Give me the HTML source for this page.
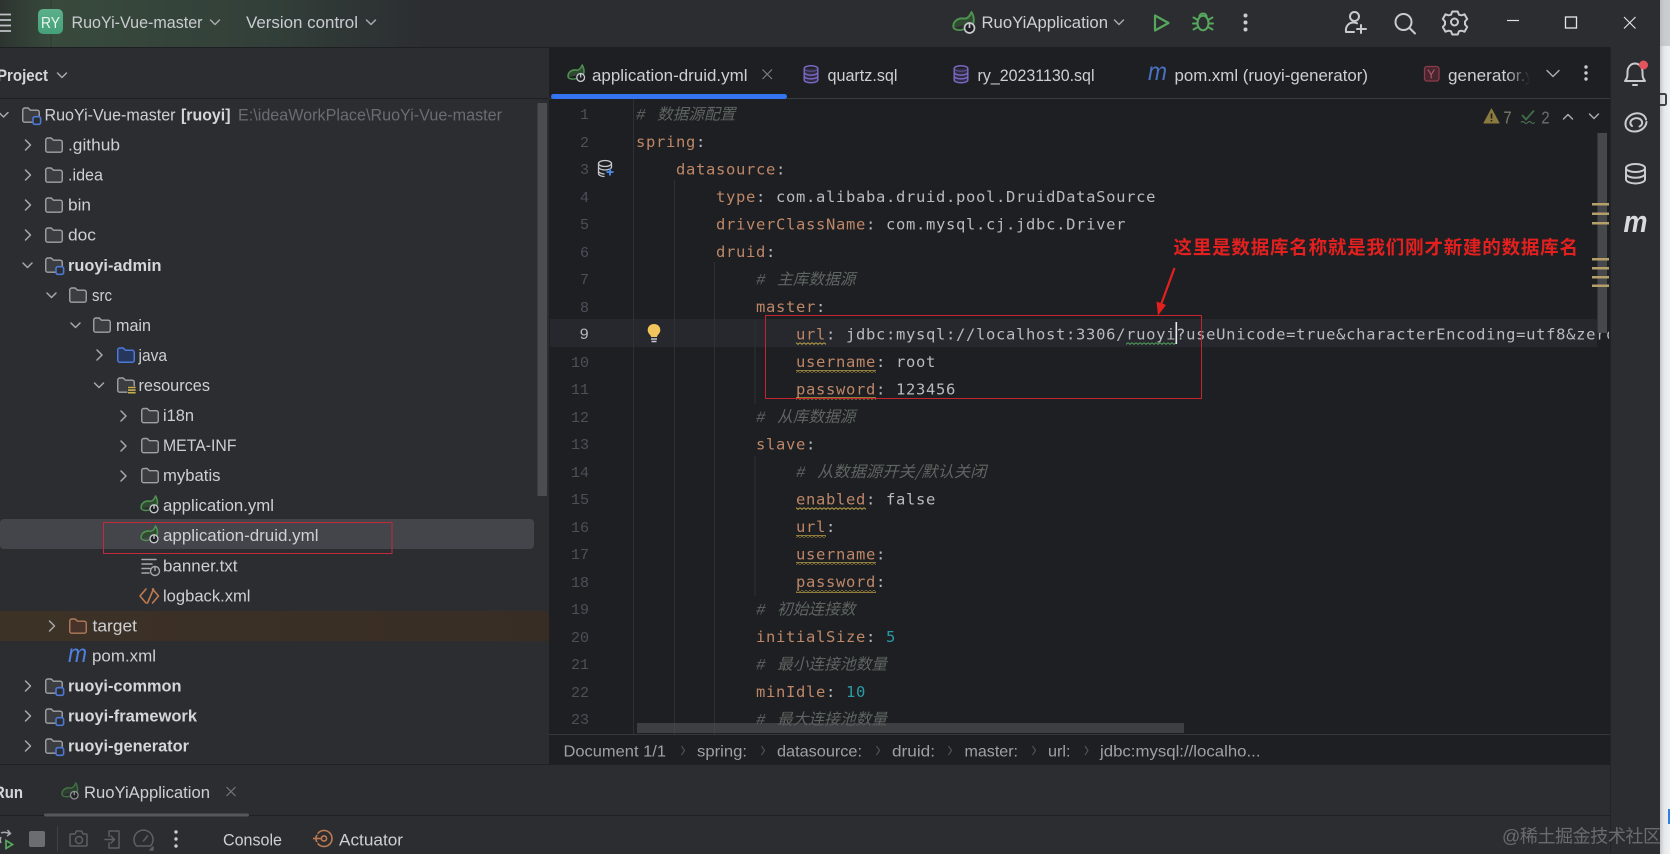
<!DOCTYPE html>
<html lang="zh">
<head>
<meta charset="utf-8">
<title>RuoYi-Vue-master</title>
<style>
html,body{margin:0;padding:0;background:#1e1f22;width:1670px;height:854px;overflow:hidden}
svg{display:block;position:absolute;left:0;top:0;filter:blur(.3px)}
text{white-space:pre}
.s{font-family:"Liberation Sans","Noto Sans CJK SC",sans-serif;font-size:16.5px;fill:#cdcfd4}
.b{font-weight:700;fill:#d4d6da}
.dim{fill:#686c73}
.t{fill:#c9cbd0}
.bc{font-family:"Liberation Sans",sans-serif;font-size:16px;fill:#9ea0a6}
.m{font-family:"DejaVu Sans Mono","Liberation Mono",monospace;font-size:15.5px;letter-spacing:.67px;fill:#b8babf}
.k{fill:#bd8768}
.n{fill:#2a9ba6}
.c{font-family:"Liberation Mono",monospace;font-size:16px;font-style:italic;fill:#5d6561}
.cj{font-family:"Noto Sans CJK SC","WenQuanYi Zen Hei",sans-serif;font-size:15.7px;font-style:italic;fill:#5d6561}
.ln{font-family:"Liberation Mono",monospace;font-size:15px;fill:#4b5059;text-anchor:end}
.ic{fill:none;stroke:#a6a8ae;stroke-width:1.5;stroke-linecap:round;stroke-linejoin:round}
.wh{fill:none;stroke:#c9cbd0;stroke-width:2;stroke-linecap:round;stroke-linejoin:round}
</style>
</head>
<body>
<svg xmlns="http://www.w3.org/2000/svg" width="1670" height="854" viewBox="0 0 1670 854">
<defs>
<linearGradient id="tg" x1="0" x2="1" y1="0" y2="0">
<stop offset="0" stop-color="#2d3430"/><stop offset=".12" stop-color="#384a3c"/><stop offset=".6" stop-color="#33403a"/><stop offset="1" stop-color="#2b2d30"/>
</linearGradient>
<linearGradient id="ry" x1="0" x2="0" y1="0" y2="1"><stop offset="0" stop-color="#5bb08a"/><stop offset="1" stop-color="#45a07a"/></linearGradient>
<linearGradient id="tgt" x1="0" x2="1" y1="0" y2="0"><stop offset="0" stop-color="#3d3226"/><stop offset=".6" stop-color="#3a2f25"/><stop offset="1" stop-color="#372d25"/></linearGradient>
<linearGradient id="fade" x1="0" x2="1" y1="0" y2="0"><stop offset="0" stop-color="#1e1f22" stop-opacity="0"/><stop offset="1" stop-color="#1e1f22"/></linearGradient>
<linearGradient id="edge" x1="0" x2="1" y1="0" y2="0"><stop offset="0" stop-color="#c4c5c7"/><stop offset=".4" stop-color="#e6e7e9"/><stop offset="1" stop-color="#f0f1f3"/></linearGradient>
<pattern id="sqy" width="4" height="3" patternUnits="userSpaceOnUse"><path d="M0 .7 L2 2.3 L4 .7" fill="none" stroke="#b39a45" stroke-width="1"/></pattern>
<pattern id="sqg" width="4" height="3" patternUnits="userSpaceOnUse"><path d="M0 .7 L2 2.3 L4 .7" fill="none" stroke="#4e9a57" stroke-width="1"/></pattern>
<clipPath id="codeclip"><rect x="550" y="99" width="1059" height="635"/></clipPath>

<g id="folder"><path d="M.75 2.5a2 2 0 0 1 2-2h3.5l2.2 2.2h6.8a2 2 0 0 1 2 2v8a2 2 0 0 1-2 2H2.75a2 2 0 0 1-2-2z" fill="#3b3d41" stroke="#a0a2a8" stroke-width="1.4" stroke-linejoin="round"/></g>
<g id="folderb"><path d="M.75 2.5a2 2 0 0 1 2-2h3.5l2.2 2.2h6.8a2 2 0 0 1 2 2v8a2 2 0 0 1-2 2H2.75a2 2 0 0 1-2-2z" fill="#27365c" stroke="#4c78d6" stroke-width="1.5" stroke-linejoin="round"/></g>
<g id="foldero"><path d="M.75 2.5a2 2 0 0 1 2-2h3.5l2.2 2.2h6.8a2 2 0 0 1 2 2v8a2 2 0 0 1-2 2H2.75a2 2 0 0 1-2-2z" fill="#47332a" stroke="#b07c5c" stroke-width="1.4" stroke-linejoin="round"/></g>
<g id="module"><use href="#folder"/><rect x="11" y="9.2" width="7.6" height="7.6" rx="1.8" fill="#2b2d30" stroke="#4c78d6" stroke-width="1.6"/></g>
<g id="res"><use href="#folder"/><rect x="10.5" y="8.8" width="8" height="7.6" fill="#2b2d30"/><path d="M11 10h7.6M11 12.6h7.6M11 15.2h7.6" stroke="#c9ae4f" stroke-width="1.6"/></g>
<g id="leaf"><path d="M1.5 15.5C.5 9.500 6 5.500 12 6.500c3 .5 5.500-1.500 7.500-6.500 2.200 4 3 8 1.700 11.500" fill="#2f4a30" stroke="#4f9150" stroke-width="2" stroke-linejoin="round" stroke-linecap="round"/><path d="M2 16.500c3 2 6 2 9 1" fill="none" stroke="#4f9150" stroke-width="1.800" stroke-linecap="round"/><circle cx="17.500" cy="16" r="5" fill="#1e1f22" stroke="#c6c8cc" stroke-width="1.700"/><path d="M17.500 11.500v4.500" stroke="#c6c8cc" stroke-width="1.700"/></g>
<g id="dbp"><ellipse cx="8" cy="3.500" rx="6.800" ry="2.800" fill="none" stroke="#7a67c2" stroke-width="1.500"/><path d="M1.200 3.500v11.500c0 1.500 3 2.800 6.800 2.800s6.800-1.300 6.800-2.800V3.500M1.200 7.300c0 1.500 3 2.800 6.800 2.800s6.800-1.300 6.800-2.800M1.200 11.100c0 1.500 3 2.800 6.800 2.800s6.800-1.300 6.800-2.800" fill="#3a3356" fill-opacity=".6" stroke="#7a67c2" stroke-width="1.500"/></g>
</defs>

<!-- base -->
<rect width="1670" height="854" fill="#1e1f22"/>
<rect x="1660" y="0" width="10" height="854" fill="url(#edge)"/>
<rect x="1660" y="0" width="10" height="46" fill="#b4b5b7" fill-opacity=".6"/>
<path d="M1660 94h4.500a1.500 1.500 0 0 1 1.500 1.500v8a1.500 1.500 0 0 1-1.500 1.500H1660" fill="none" stroke="#3f4144" stroke-width="2"/>
<rect x="1668" y="809" width="2" height="15" fill="#2f7fe8"/>

<!-- title bar -->
<rect x="0" y="0" width="1660" height="47" fill="#2b2d30"/>
<rect x="0" y="0" width="430" height="47" fill="url(#tg)"/>
<rect x="50.500" y="0" width="1" height="47" fill="#2f3a33"/>
<path d="M0 14.500h11M0 20h11M0 25.500h11M0 31h11" stroke="#bfc1c5" stroke-width="1.700"/>
<rect x="38" y="9" width="25" height="25" rx="5" fill="url(#ry)"/>
<text x="41" y="28" font-family="Liberation Sans,sans-serif" font-size="15.500" fill="#eaf5ef" textLength="19" lengthAdjust="spacingAndGlyphs">RY</text>
<text class="s t" x="71.500" y="28" textLength="131" lengthAdjust="spacingAndGlyphs">RuoYi-Vue-master</text>
<path class="ic" d="M210.500 20l4.500 4.500 4.500-4.500"/>
<text class="s t" x="246" y="28" textLength="112" lengthAdjust="spacingAndGlyphs">Version control</text>
<path class="ic" d="M366.500 20l4.500 4.500 4.500-4.500"/>
<use href="#leaf" transform="translate(952,12)"/>
<text class="s" x="981.500" y="28" fill="#dfe1e5" textLength="126.500" lengthAdjust="spacingAndGlyphs">RuoYiApplication</text>
<path class="ic" d="M1114.500 20l4.500 4.500 4.500-4.500"/>
<path d="M1155 15.500L1168.500 23 1155 30.500Z" fill="none" stroke="#57a65e" stroke-width="2.200" stroke-linejoin="round"/>
<g fill="none" stroke="#57a65e" stroke-width="2" stroke-linecap="round"><ellipse cx="1203" cy="23" rx="5.500" ry="7.300"/><path d="M1199.500 16.500c0-4 7-4 7 0M1193.500 17.500l3.500 2M1212.500 17.500l-3.500 2M1193 23.500h4.500M1213 23.500h-4.500M1193.500 29.500l3.500-2M1212.500 29.500l-3.500-2"/></g>
<circle cx="1245.500" cy="15.500" r="2" fill="#c9cbd0"/><circle cx="1245.500" cy="22.500" r="2" fill="#c9cbd0"/><circle cx="1245.500" cy="29.500" r="2" fill="#c9cbd0"/>
<g class="wh"><circle cx="1354.500" cy="16.500" r="4.500"/><path d="M1346 32c-.8-6 3-9.500 7.500-9.500 1.500 0 2.500.3 3.500.8M1346 32h8M1361 25v8M1357 29h9"/><circle cx="1403.500" cy="22" r="8"/><path d="M1409.500 28l5.500 5.500"/><path d="M1448.500 15.800l2.500-.5 1.300-3.300h5.400l1.300 3.300 2.500.5 3-1 2.700 4.700-2.200 2.500v3l2.200 2.500-2.700 4.700-3-1-2.500.5-1.300 3.300h-5.400l-1.300-3.300-2.500-.5-3 1-2.700-4.700 2.200-2.500v-3l-2.200-2.500 2.700-4.700z" transform="translate(0,-.5)"/><circle cx="1454.500" cy="22" r="3.500"/></g>
<path d="M1507 20.500h12" stroke="#dfe1e5" stroke-width="1.200"/>
<rect x="1565.500" y="17" width="11" height="11" fill="none" stroke="#e6e7ea" stroke-width="1.300"/>
<path d="M1624 17l11.500 11.500M1635.500 17L1624 28.500" stroke="#e6e7ea" stroke-width="1.100"/>

<!-- left panel -->
<rect x="0" y="48" width="549" height="716" fill="#2b2d30"/>
<rect x="0" y="98" width="549" height="1" fill="#1f2023"/>
<text class="s b" x="-3" y="81" textLength="51" lengthAdjust="spacingAndGlyphs">Project</text>
<path class="ic" d="M57.500 73l4.500 4.500 4.500-4.500"/>
<rect x="537.500" y="103" width="9.500" height="393" rx="1" fill="#4b4c50"/>
<rect x="0" y="519" width="534" height="30" rx="4" fill="#43454a"/>
<rect x="0" y="611" width="549" height="30" fill="url(#tgt)"/>

<!-- tree -->
<g class="ic">
<path d="M-1 112.500l4.500 4.500 4.500-4.500"/>
<path d="M25.500 140l5 5-5 5M25.500 170l5 5-5 5M25.500 200l5 5-5 5M25.500 230l5 5-5 5"/>
<path d="M23 263l4.500 4.500 4.500-4.500"/>
<path d="M47 293l4.500 4.500 4.500-4.500"/>
<path d="M71 323l4.500 4.500 4.500-4.500"/>
<path d="M97 350l5 5-5 5"/>
<path d="M94.500 383l4.500 4.500 4.500-4.500"/>
<path d="M121 411l5 5-5 5M121 441l5 5-5 5M121 471l5 5-5 5"/>
<path d="M49.500 621l5 5-5 5"/>
<path d="M25.500 681l5 5-5 5M25.500 711l5 5-5 5M25.500 741l5 5-5 5"/>
</g>
<use href="#module" transform="translate(22,107.500)"/>
<use href="#folder" transform="translate(45,137.500)"/>
<use href="#folder" transform="translate(45,167.500)"/>
<use href="#folder" transform="translate(45,197.500)"/>
<use href="#folder" transform="translate(45,227.500)"/>
<use href="#module" transform="translate(45,257.500)"/>
<use href="#folder" transform="translate(69,287.500)"/>
<use href="#folder" transform="translate(93,317.500)"/>
<use href="#folderb" transform="translate(117,347.500)"/>
<use href="#res" transform="translate(117,377.500)"/>
<use href="#folder" transform="translate(141,408)"/>
<use href="#folder" transform="translate(141,438)"/>
<use href="#folder" transform="translate(141,468)"/>
<use href="#leaf" transform="translate(140,496) scale(.8)"/>
<use href="#leaf" transform="translate(140,526) scale(.8)"/>
<g transform="translate(141,558)"><path d="M1 1.500h14M1 6h10M1 10.500h8M1 15h7" class="ic"/><circle cx="14" cy="13" r="4.500" fill="#2b2d30" stroke="#a6a8ae" stroke-width="1.400"/><path d="M14 9v4" stroke="#a6a8ae" stroke-width="1.400"/></g>
<g fill="none" stroke="#c07a50" stroke-width="1.600" stroke-linecap="round" stroke-linejoin="round"><path d="M146 589l-6 7 6 7M153.500 589l-6 14" /><path d="M152.500 589l6 7-6 7"/></g>
<use href="#foldero" transform="translate(69,618.500)"/>
<text x="68" y="662" font-family="Liberation Sans,sans-serif" font-size="25" font-style="italic" fill="#4f82de" textLength="19" lengthAdjust="spacingAndGlyphs">m</text>
<use href="#module" transform="translate(45,678.500)"/>
<use href="#module" transform="translate(45,708.500)"/>
<use href="#module" transform="translate(45,738.500)"/>

<text class="s" x="44.500" y="120.500" textLength="131" lengthAdjust="spacingAndGlyphs">RuoYi-Vue-master</text>
<text class="s b" x="181" y="120.500" textLength="49.500" lengthAdjust="spacingAndGlyphs">[ruoyi]</text>
<text class="s dim" x="238" y="120.500" textLength="264" lengthAdjust="spacingAndGlyphs">E:\ideaWorkPlace\RuoYi-Vue-master</text>
<text class="s" x="68" y="150.500" textLength="52" lengthAdjust="spacingAndGlyphs">.github</text>
<text class="s" x="68" y="180.600" textLength="35" lengthAdjust="spacingAndGlyphs">.idea</text>
<text class="s" x="68" y="210.700" textLength="23" lengthAdjust="spacingAndGlyphs">bin</text>
<text class="s" x="68" y="240.700" textLength="28" lengthAdjust="spacingAndGlyphs">doc</text>
<text class="s b" x="68" y="270.800" textLength="93.500" lengthAdjust="spacingAndGlyphs">ruoyi-admin</text>
<text class="s" x="92" y="300.800" textLength="20" lengthAdjust="spacingAndGlyphs">src</text>
<text class="s" x="116" y="330.900" textLength="35" lengthAdjust="spacingAndGlyphs">main</text>
<text class="s" x="138.500" y="360.900" textLength="28.500" lengthAdjust="spacingAndGlyphs">java</text>
<text class="s" x="138.500" y="390.900" textLength="71.500" lengthAdjust="spacingAndGlyphs">resources</text>
<text class="s" x="163" y="421" textLength="31" lengthAdjust="spacingAndGlyphs">i18n</text>
<text class="s" x="163" y="451" textLength="73.500" lengthAdjust="spacingAndGlyphs">META-INF</text>
<text class="s" x="163" y="481.100" textLength="57.500" lengthAdjust="spacingAndGlyphs">mybatis</text>
<text class="s" x="163" y="511.200" textLength="111" lengthAdjust="spacingAndGlyphs">application.yml</text>
<text class="s" x="163" y="541.200" textLength="155.500" lengthAdjust="spacingAndGlyphs">application-druid.yml</text>
<text class="s" x="163" y="571.300" textLength="74.500" lengthAdjust="spacingAndGlyphs">banner.txt</text>
<text class="s" x="163" y="601.300" textLength="87.500" lengthAdjust="spacingAndGlyphs">logback.xml</text>
<text class="s" x="92.500" y="631.400" textLength="44.500" lengthAdjust="spacingAndGlyphs">target</text>
<text class="s" x="92" y="661.400" textLength="64" lengthAdjust="spacingAndGlyphs">pom.xml</text>
<text class="s b" x="68" y="691.500" textLength="113.500" lengthAdjust="spacingAndGlyphs">ruoyi-common</text>
<text class="s b" x="68" y="721.500" textLength="129" lengthAdjust="spacingAndGlyphs">ruoyi-framework</text>
<text class="s b" x="68" y="751.600" textLength="121" lengthAdjust="spacingAndGlyphs">ruoyi-generator</text>
<rect x="103.500" y="522.500" width="288.500" height="31" fill="none" stroke="#c22a3c" stroke-width="1"/>

<!-- tab bar -->
<rect x="549" y="47" width="1061" height="52" fill="#1e1f22"/>
<rect x="549" y="98" width="1061" height="1" fill="#393b3f"/>
<rect x="551" y="94" width="236" height="5" rx="2.500" fill="#3574f0"/>
<use href="#leaf" transform="translate(567,65) scale(.78)"/>
<text class="s" x="592" y="81" fill="#dfe1e5" textLength="155.500" lengthAdjust="spacingAndGlyphs">application-druid.yml</text>
<path d="M762.500 69.500l9.500 9.500M772 69.500L762.500 79" stroke="#7b7d83" stroke-width="1.200"/>
<use href="#dbp" transform="translate(803,65)"/>
<text class="s" x="827.500" y="81" textLength="70" lengthAdjust="spacingAndGlyphs">quartz.sql</text>
<use href="#dbp" transform="translate(953,65)"/>
<text class="s" x="977.500" y="81" textLength="117" lengthAdjust="spacingAndGlyphs">ry_20231130.sql</text>
<text x="1148" y="80" font-family="Liberation Sans,sans-serif" font-size="25" font-style="italic" fill="#4a72c4" textLength="19" lengthAdjust="spacingAndGlyphs">m</text>
<text class="s" x="1174.500" y="81" textLength="193.500" lengthAdjust="spacingAndGlyphs">pom.xml (ruoyi-generator)</text>
<rect x="1424.500" y="66.500" width="14.500" height="14.500" rx="2.500" fill="#47262f" stroke="#8e3a4c" stroke-width="1.300"/>
<text x="1427" y="78.500" font-family="Liberation Sans,sans-serif" font-size="12.500" fill="#b45a6c">Y</text>
<text class="s" x="1448" y="81" textLength="104" lengthAdjust="spacingAndGlyphs">generator.yml</text>
<rect x="1506" y="60" width="24" height="34" fill="url(#fade)"/>
<rect x="1530" y="60" width="80" height="34" fill="#1e1f22"/>
<path class="ic" d="M1547 70.500l6 6 6-6"/>
<circle cx="1586" cy="67" r="1.700" fill="#c9cbd0"/><circle cx="1586" cy="73" r="1.700" fill="#c9cbd0"/><circle cx="1586" cy="79" r="1.700" fill="#c9cbd0"/>

<!-- editor -->
<rect x="550" y="319" width="1047" height="28" fill="#26282e"/>
<rect x="633" y="99" width="1" height="635" fill="#2e3034"/>
<rect x="674" y="180" width="1" height="554" fill="#2e3034"/>
<rect x="714" y="262" width="1" height="472" fill="#2e3034"/>
<rect x="754.500" y="320" width="1" height="84" fill="#2e3034"/>
<rect x="754.500" y="456" width="1" height="140" fill="#2e3034"/>

<g class="ln">
<text x="589" y="119">1</text><text x="589" y="147">2</text><text x="589" y="174">3</text><text x="589" y="202">4</text><text x="589" y="229">5</text><text x="589" y="257">6</text><text x="589" y="284">7</text><text x="589" y="312">8</text>
<text x="589" y="339" style="fill:#b4b6bc;font-size:16px">9</text><text x="589" y="367">10</text><text x="589" y="394">11</text><text x="589" y="422">12</text><text x="589" y="449">13</text><text x="589" y="477">14</text><text x="589" y="504">15</text><text x="589" y="532">16</text><text x="589" y="559">17</text><text x="589" y="587">18</text><text x="589" y="614">19</text><text x="589" y="642">20</text><text x="589" y="669">21</text><text x="589" y="697">22</text><text x="589" y="724">23</text>
</g>

<g fill="none" stroke="#c6c8cc" stroke-width="1.300"><ellipse cx="605" cy="163.500" rx="6.500" ry="3"/><path d="M598.500 163.500v10c0 1.800 3 3 6 3M611.500 163.500v4M598.500 167c0 1.500 3 3 6.500 3s6.500-1.500 6.500-3M598.500 171c0 1.500 3 3 6 3"/></g>
<path d="M610 168.500v7M606.500 172h7" stroke="#4c8df0" stroke-width="1.800"/>

<path d="M654 324c-3.800 0-6.300 2.700-6.300 6 0 2.300 1.300 3.700 2.400 5 .6.700.9 1.500.9 2h6c0-.5.300-1.300.9-2 1.100-1.300 2.400-2.700 2.400-5 0-3.300-2.500-6-6.300-6z" fill="#f2c55c"/>
<path d="M651 339h6M651.500 341.500h5" stroke="#c6c8cc" stroke-width="1.400"/>

<g clip-path="url(#codeclip)">
<g>
<text class="c" x="636" y="119.500">#</text><text class="cj" x="657" y="119.500" textLength="78.500" lengthAdjust="spacingAndGlyphs">数据源配置</text>
<text class="m" x="636" y="147"><tspan class="k">spring</tspan>:</text>
<text class="m" x="676" y="174.500"><tspan class="k">datasource</tspan>:</text>
<text class="m" x="716" y="202"><tspan class="k">type</tspan>: com.alibaba.druid.pool.DruidDataSource</text>
<text class="m" x="716" y="229.500"><tspan class="k">driverClassName</tspan>: com.mysql.cj.jdbc.Driver</text>
<text class="m" x="716" y="257"><tspan class="k">druid</tspan>:</text>
<text class="c" x="756" y="284.500">#</text><text class="cj" x="777" y="284.500" textLength="78.500" lengthAdjust="spacingAndGlyphs">主库数据源</text>
<text class="m" x="756" y="312"><tspan class="k">master</tspan>:</text>
<text class="m" x="796" y="339.500"><tspan class="k">url</tspan>: jdbc:mysql://localhost:3306/ruoyi?useUnicode=true&amp;characterEncoding=utf8&amp;zeroDateTimeBehavior=convertToNull</text>
<text class="m" x="796" y="367"><tspan class="k">username</tspan>: root</text>
<text class="m" x="796" y="394.500"><tspan class="k">password</tspan>: 123456</text>
<text class="c" x="756" y="422">#</text><text class="cj" x="777" y="422" textLength="78.500" lengthAdjust="spacingAndGlyphs">从库数据源</text>
<text class="m" x="756" y="449.500"><tspan class="k">slave</tspan>:</text>
<text class="c" x="796" y="477">#</text><text class="cj" x="817" y="477" textLength="169.500" lengthAdjust="spacingAndGlyphs">从数据源开关/默认关闭</text>
<text class="m" x="796" y="504.500"><tspan class="k">enabled</tspan>: false</text>
<text class="m" x="796" y="532"><tspan class="k">url</tspan>:</text>
<text class="m" x="796" y="559.500"><tspan class="k">username</tspan>:</text>
<text class="m" x="796" y="587"><tspan class="k">password</tspan>:</text>
<text class="c" x="756" y="614.500">#</text><text class="cj" x="777" y="614.500" textLength="78.500" lengthAdjust="spacingAndGlyphs">初始连接数</text>
<text class="m" x="756" y="642"><tspan class="k">initialSize</tspan>: <tspan class="n">5</tspan></text>
<text class="c" x="756" y="669.500">#</text><text class="cj" x="777" y="669.500" textLength="110" lengthAdjust="spacingAndGlyphs">最小连接池数量</text>
<text class="m" x="756" y="697"><tspan class="k">minIdle</tspan>: <tspan class="n">10</tspan></text>
<text class="c" x="756" y="724.500">#</text><text class="cj" x="777" y="724.500" textLength="110" lengthAdjust="spacingAndGlyphs">最大连接池数量</text>
</g>
<rect x="796" y="342" width="30" height="3" fill="url(#sqy)"/>
<rect x="1126" y="342" width="50" height="3" fill="url(#sqg)"/>
<rect x="796" y="370" width="80" height="3" fill="url(#sqy)"/>
<rect x="796" y="397" width="80" height="3" fill="url(#sqy)"/>
<rect x="796" y="507" width="70" height="3" fill="url(#sqy)"/>
<rect x="796" y="535" width="30" height="3" fill="url(#sqy)"/>
<rect x="796" y="562" width="80" height="3" fill="url(#sqy)"/>
<rect x="796" y="590" width="80" height="3" fill="url(#sqy)"/>
</g>
<rect x="1175.500" y="322" width="1.600" height="22" fill="#e8e9ec"/>

<!-- editor widgets -->
<path d="M1491.500 109l7.500 14h-15z" fill="#8a7a3e" stroke="#8a7a3e" stroke-linejoin="round" stroke-width="1"/>
<path d="M1491.500 113.500v5M1491.500 120v1.500" stroke="#1e1f22" stroke-width="1.600"/>
<text x="1503" y="123.500" font-family="Liberation Mono,monospace" font-size="18" fill="#7a7a6a" textLength="9" lengthAdjust="spacingAndGlyphs">7</text>
<path d="M1522 115l4 4.500 8-9" fill="none" stroke="#3f6e48" stroke-width="1.800"/>
<path d="M1521 122.500q1.700-2 3.400 0t3.400 0 3.400 0 3.400 0" fill="none" stroke="#4a6a50" stroke-width="1.200"/>
<text x="1541" y="123.500" font-family="Liberation Mono,monospace" font-size="18" fill="#686c73" textLength="9" lengthAdjust="spacingAndGlyphs">2</text>
<path class="ic" d="M1563.500 119l4.500-4.500 4.500 4.500M1589.500 114l4.500 4.500 4.500-4.500"/>
<rect x="1597.500" y="133" width="9.500" height="200" fill="#47484c"/>
<g fill="#b4a068"><rect x="1592" y="203" width="17" height="2.500"/><rect x="1592" y="212.500" width="17" height="2.500"/><rect x="1592" y="222" width="17" height="2.500"/><rect x="1592" y="258" width="17" height="2.500"/><rect x="1592" y="267" width="17" height="2.500"/><rect x="1592" y="276" width="17" height="2.500"/><rect x="1592" y="284.500" width="17" height="2.500"/></g>

<!-- annotations -->
<rect x="765.500" y="315.500" width="436" height="83" fill="none" stroke="#c5232f" stroke-width="1"/>
<text x="1173.500" y="254" font-family="Noto Sans CJK SC,WenQuanYi Zen Hei,sans-serif" font-size="18.500" font-weight="700" fill="#e3201f" textLength="404.500">这里是数据库名称就是我们刚才新建的数据库名</text>
<path d="M1174.500 268L1160.500 306" stroke="#e3201f" stroke-width="2.200"/>
<path d="M1158 315.500L1156.500 301.500 1166 305z" fill="#e3201f"/>

<!-- horizontal scrollbar -->
<rect x="637" y="723" width="547" height="10" fill="#58595c" fill-opacity=".55"/>

<!-- breadcrumbs -->
<rect x="549" y="734" width="1061" height="30" fill="#1e1f22"/>
<rect x="549" y="734" width="1061" height="1" fill="#35373b"/>
<text class="bc" x="563.500" y="756.500" textLength="102.500" lengthAdjust="spacingAndGlyphs">Document 1/1</text>
<text class="bc" x="697" y="756.500" textLength="50" lengthAdjust="spacingAndGlyphs">spring:</text>
<text class="bc" x="777" y="756.500" textLength="85" lengthAdjust="spacingAndGlyphs">datasource:</text>
<text class="bc" x="892" y="756.500" textLength="43" lengthAdjust="spacingAndGlyphs">druid:</text>
<text class="bc" x="964.500" y="756.500" textLength="53.500" lengthAdjust="spacingAndGlyphs">master:</text>
<text class="bc" x="1048" y="756.500" textLength="22.500" lengthAdjust="spacingAndGlyphs">url:</text>
<text class="bc" x="1100" y="756.500" textLength="160.500" lengthAdjust="spacingAndGlyphs">jdbc:mysql://localho...</text>
<path d="M681.500 746l3 4.500-3 4.500M761.500 746l3 4.500-3 4.500M876.500 746l3 4.500-3 4.500M948.500 746l3 4.500-3 4.500M1032.500 746l3 4.500-3 4.500M1085 746l3 4.500-3 4.500" fill="none" stroke="#55575c" stroke-width="1.100"/>

<!-- bottom panel -->
<rect x="0" y="764" width="1610" height="90" fill="#2b2d30"/>
<rect x="0" y="764" width="1610" height="1" fill="#1f2023"/>
<rect x="0" y="815" width="1610" height="1" fill="#1f2023"/>
<rect x="44" y="813.500" width="205" height="3" rx="1.500" fill="#55575b"/>
<text class="s b" x="-6" y="798" textLength="29" lengthAdjust="spacingAndGlyphs">Run</text>
<use href="#leaf" transform="translate(61,783) scale(.76)" opacity=".65"/>
<text class="s" x="84" y="798" textLength="126" lengthAdjust="spacingAndGlyphs">RuoYiApplication</text>
<path d="M226.500 787l9 9M235.500 787l-9 9" stroke="#75777c" stroke-width="1.200"/>

<g fill="none" stroke="#a6a8ae" stroke-width="1.500"><path d="M10 834c-3-2-7-2-9-1M1 843c-1-2-1-4 0-6M7.500 830l3 3.500-3.500 2.500"/></g>
<path d="M6 840.500l6.500 4-6.500 4z" fill="none" stroke="#57a65e" stroke-width="1.700"/>
<rect x="29" y="831" width="16" height="16" rx="2" fill="#6c6d71"/>
<rect x="57" y="826" width="1" height="25" fill="#3f4145"/>
<g fill="none" stroke="#5d5f64" stroke-width="1.500" stroke-linejoin="round" stroke-linecap="round">
<path d="M71 834h4l1.500-3h5l1.500 3h3a1 1 0 0 1 1 1v10a1 1 0 0 1-1 1H71a1 1 0 0 1-1-1v-10a1 1 0 0 1 1-1z"/><circle cx="79" cy="840" r="3.500"/>
<path d="M109 836v-5h10v17h-10v-5M105 839.500h9M111 836l3.500 3.500L111 843"/>
<path d="M136.500 846a9.500 9.500 0 1 1 14 0zM143.500 841l4-5"/><path d="M150 850l3-3v3z"/>
</g>
<circle cx="176" cy="832" r="1.700" fill="#c9cbd0"/><circle cx="176" cy="839" r="1.700" fill="#c9cbd0"/><circle cx="176" cy="846" r="1.700" fill="#c9cbd0"/>
<text class="s" x="223" y="845.500" textLength="59" lengthAdjust="spacingAndGlyphs">Console</text>
<g fill="none" stroke="#c07a50" stroke-width="1.600"><circle cx="324" cy="838.500" r="8"/><circle cx="324" cy="838.500" r="2.600"/><path d="M313 838.500h8"/></g>
<rect x="312.500" y="829" width="5" height="6" fill="#2b2d30"/><rect x="312.500" y="842" width="5" height="6" fill="#2b2d30"/>
<text class="s" x="339" y="845.500" textLength="64" lengthAdjust="spacingAndGlyphs">Actuator</text>

<!-- right stripe -->
<rect x="1610" y="47" width="50" height="807" fill="#2b2d30"/>
<rect x="1610" y="47" width="1" height="807" fill="#232427"/>
<g fill="none" stroke="#c9cbd0" stroke-width="2" stroke-linecap="round" stroke-linejoin="round">
<path d="M1625 81c2.500-3 2.500-5 2.500-9 0-5 3.500-8.500 7.500-8.500s7.500 3.500 7.500 8.500c0 4 0 6 2.500 9z"/><path d="M1633 85h4"/>
<path d="M1626 127c-2-6 2-12 9-13.500 6-1 10 2 11 6M1646.500 122c-.5 5-5 9-11 9.500-3.500.3-7-1-9-3.500M1632 126c-2.500-2-2-5.500 1-7 3-1.500 7-1 8.500 1.500 1.500 2.500.3 5-2 6"/>
<ellipse cx="1635.500" cy="168" rx="9.500" ry="4"/><path d="M1626 168v11.500c0 2 4.300 4 9.500 4s9.500-2 9.500-4V168M1626 173.800c0 2 4.300 4 9.500 4s9.500-2 9.500-4"/>
</g>
<circle cx="1643.500" cy="65" r="4.500" fill="#e5545c"/>
<text x="1623.500" y="232" font-family="Liberation Sans,sans-serif" font-size="31" font-weight="700" font-style="italic" fill="#d8dade" textLength="24" lengthAdjust="spacingAndGlyphs">m</text>

<!-- watermark -->
<text x="1502" y="842.500" font-family="Liberation Sans,Noto Sans CJK SC,sans-serif" font-size="18" fill="#7f8184" fill-opacity=".75" textLength="159">@稀土掘金技术社区</text>
</svg>
</body>
</html>
